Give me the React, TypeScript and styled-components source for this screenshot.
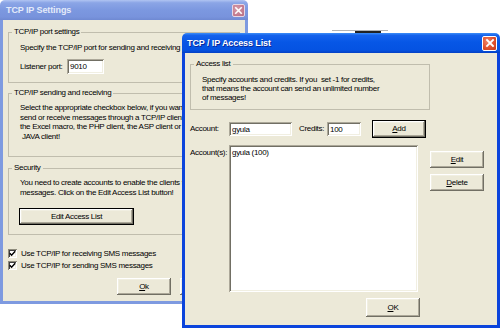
import React from "react";
import styled, { createGlobalStyle, css } from "styled-components";

const GlobalStyle = createGlobalStyle`
  html, body {
    margin: 0;
    padding: 0;
    background: #fff;
    overflow: hidden;
  }
  body {
    font-family: "Liberation Sans", Arial, sans-serif;
    font-size: 8px;
    letter-spacing: -0.3px;
    color: #000;
  }
`;

const Desktop = styled.div`
  position: relative;
  width: 500px;
  height: 328px;
  overflow: hidden;
  background: #fff;
`;

// a sliver of some other window peeking out above the access list dialog
const BackSliver = styled.div`
  position: absolute;
  left: 332px;
  top: 30px;
  width: 56px;
  height: 3px;
  border-top: 1px solid #b4b4b4;
  display: flex;
  padding-left: 23px;
  box-sizing: border-box;
`;

const BackMark = styled.div`
  width: 26px;
  height: 2px;
  background: #222;
`;

const Window = styled.div<{ $x: number; $y: number; $w: number; $h: number }>`
  position: absolute;
  left: ${(p) => p.$x}px;
  top: ${(p) => p.$y}px;
  width: ${(p) => p.$w}px;
  height: ${(p) => p.$h}px;
  display: flex;
  flex-direction: column;
`;

const activeTitle = css`
  background: linear-gradient(
    180deg,
    #3d8ef7 0%,
    #1562ec 12%,
    #0757e6 45%,
    #0553e2 85%,
    #0440c4 100%
  );
`;

const inactiveTitle = css`
  background: linear-gradient(
    180deg,
    #b0c4f2 0%,
    #8ba5e6 14%,
    #7c98e0 50%,
    #7893dc 85%,
    #6f89d2 100%
  );
`;

const TitleBar = styled.div<{ $active?: boolean }>`
  flex: none;
  height: 20px;
  display: flex;
  align-items: center;
  justify-content: space-between;
  padding: 0 3px 0 ${(p) => (p.$active ? 5 : 6)}px;
  border-radius: 5px 5px 0 0;
  ${(p) => (p.$active ? activeTitle : inactiveTitle)}
`;

const Title = styled.span<{ $active?: boolean }>`
  font-weight: bold;
  font-size: 9px;
  letter-spacing: -0.1px;
  line-height: 12px;
  color: ${(p) => (p.$active ? "#fff" : "#e4ebfa")};
  text-shadow: ${(p) => (p.$active ? "1px 1px 0 #0a2a9a" : "none")};
  white-space: nowrap;
`;

const CloseButton = styled.div<{ $active?: boolean }>`
  box-sizing: border-box;
  width: ${(p) => (p.$active ? 15 : 13)}px;
  height: ${(p) => (p.$active ? 15 : 13)}px;
  border: 1px solid ${(p) => (p.$active ? "#fff" : "#e6d6e4")};
  border-radius: 2px;
  display: flex;
  align-items: center;
  justify-content: center;
  background: ${(p) =>
    p.$active
      ? "radial-gradient(circle at 35% 35%, #f0866a 0%, #e0502c 55%, #c43a1c 100%)"
      : "radial-gradient(circle at 35% 35%, #d69aa9 0%, #c47d90 60%, #b46e84 100%)"};
`;

const Body = styled.div<{ $active?: boolean; $pt: number; $pr: number }>`
  flex: 1;
  display: flex;
  flex-direction: column;
  align-items: stretch;
  background: #ece9d8;
  border: 3px solid ${(p) => (p.$active ? "#0b44dc" : "#7e9ae0")};
  border-top: none;
  padding: ${(p) => p.$pt}px ${(p) => p.$pr}px 0 5px;
`;

const GroupBox = styled.fieldset<{ $mt?: number; $w?: number }>`
  margin: ${(p) => p.$mt ?? 0}px 0 0;
  padding: 0 0 0 3px;
  border: 1px solid #c0bdad;
  min-width: 0;
  ${(p) =>
    p.$w &&
    css`
      width: ${p.$w}px;
      box-sizing: border-box;
      align-self: flex-start;
    `}
`;

const Legend = styled.legend`
  padding: 0 2px;
  line-height: 12px;
`;

const GroupBody = styled.div<{ $pt: number; $pb: number }>`
  display: flex;
  flex-direction: column;
  align-items: flex-start;
  padding: ${(p) => p.$pt}px 0 ${(p) => p.$pb}px 8px;
`;

const Para = styled.div<{ $lh: number }>`
  line-height: ${(p) => p.$lh}px;
  white-space: nowrap;
`;

const Row = styled.div<{ $mt?: number }>`
  display: flex;
  align-items: center;
  margin-top: ${(p) => p.$mt ?? 0}px;
`;

const TopRow = styled.div<{ $mt?: number }>`
  display: flex;
  align-items: flex-start;
  margin-top: ${(p) => p.$mt ?? 0}px;
`;

const Label = styled.span<{ $w: number; $ml?: number; $mt?: number }>`
  flex: none;
  width: ${(p) => p.$w}px;
  margin-left: ${(p) => p.$ml ?? 0}px;
  margin-top: ${(p) => p.$mt ?? 0}px;
  line-height: 12px;
  white-space: nowrap;
`;

const sunken = css`
  box-shadow: inset 1px 1px #aca899, inset -1px -1px #fff, inset 2px 2px #716f64,
    inset -2px -2px #f1efe2;
`;

const TextField = styled.div<{ $w: number; $h: number }>`
  flex: none;
  box-sizing: border-box;
  width: ${(p) => p.$w}px;
  height: ${(p) => p.$h}px;
  padding: 0 3px;
  background: #fff;
  display: flex;
  align-items: center;
  white-space: nowrap;
  ${sunken}
`;

const ListBox = styled.div<{ $w: number; $h: number }>`
  flex: none;
  box-sizing: border-box;
  width: ${(p) => p.$w}px;
  height: ${(p) => p.$h}px;
  padding: 2px 3px;
  background: #fff;
  line-height: 11px;
  ${sunken}
`;

const Button = styled.button<{ $w: number; $h: number; $default?: boolean; $mt?: number; $ml?: number }>`
  flex: none;
  box-sizing: border-box;
  width: ${(p) => p.$w}px;
  height: ${(p) => p.$h}px;
  margin: ${(p) => p.$mt ?? 0}px 0 0 ${(p) => p.$ml ?? 0}px;
  padding: 0;
  font: inherit;
  letter-spacing: inherit;
  color: #000;
  background: #ece9d8;
  border: ${(p) => (p.$default ? "1px solid #000" : "none")};
  box-shadow: inset -1px -1px #716f64, inset 1px 1px #fff, inset -2px -2px #aca899,
    inset 2px 2px #f1efe2;
  line-height: 10px;
  white-space: nowrap;
  cursor: default;
`;

const ButtonColumn = styled.div<{ $ml: number; $mt: number }>`
  display: flex;
  flex-direction: column;
  gap: 6px;
  margin: ${(p) => p.$mt}px 0 0 ${(p) => p.$ml}px;
`;

const ButtonRow = styled.div<{ $mt: number; $mr: number }>`
  display: flex;
  justify-content: flex-end;
  gap: 9px;
  margin: ${(p) => p.$mt}px ${(p) => p.$mr}px 0 0;
`;

const CheckRow = styled.div<{ $mt?: number }>`
  display: flex;
  align-items: center;
  gap: 4px;
  height: 12px;
  margin-top: ${(p) => p.$mt ?? 0}px;
  white-space: nowrap;
`;

const CheckBox = styled.div`
  flex: none;
  box-sizing: border-box;
  width: 9px;
  height: 9px;
  background: #fff;
  display: flex;
  align-items: center;
  justify-content: center;
  box-shadow: inset 1px 1px #8e8b7c, inset -1px -1px #fff, inset 2px 2px #404040,
    inset -2px -2px #f1efe2;
`;

const CloseIcon = ({ size }: { size: number }) => (
  <svg width={size} height={size} viewBox="0 0 10 10">
    <path d="M2 2 L8 8 M8 2 L2 8" stroke="#fff" strokeWidth="1.8" strokeLinecap="square" />
  </svg>
);

const Check = () => (
  <svg width="7" height="7" viewBox="0 0 7 7">
    <path d="M0.8 3.2 L2.6 5.2 L6.2 1.2" stroke="#000" strokeWidth="1.4" fill="none" />
  </svg>
);

export default function App() {
  return (
    <Desktop>
      <GlobalStyle />
      <BackSliver>
        <BackMark />
      </BackSliver>

      <Window $x={0} $y={0} $w={248} $h={304}>
        <TitleBar>
          <Title>TCP IP Settings</Title>
          <CloseButton>
            <CloseIcon size={9} />
          </CloseButton>
        </TitleBar>
        <Body $pt={6} $pr={5}>
          <GroupBox>
            <Legend>TCP/IP port settings</Legend>
            <GroupBody $pt={5} $pb={8}>
              <Para $lh={10}>Specify the TCP/IP port for sending and receiving messages.</Para>
              <Row $mt={6}>
                <Label $w={47}>Listener port:</Label>
                <TextField $w={37} $h={15}>9010</TextField>
              </Row>
            </GroupBody>
          </GroupBox>

          <GroupBox $mt={4}>
            <Legend>TCP/IP sending and receiving</Legend>
            <GroupBody $pt={4} $pb={15}>
              <Para $lh={9.5}>
                Select the appropriate checkbox below, if you want to
                <br />
                send or receive messages through a TCP/IP client like
                <br />
                the Excel macro, the PHP client, the ASP client or the
                <br />
                &nbsp;JAVA client!
              </Para>
            </GroupBody>
          </GroupBox>

          <GroupBox $mt={5}>
            <Legend>Security</Legend>
            <GroupBody $pt={4} $pb={9}>
              <Para $lh={10}>
                You need to create accounts to enable the clients to send
                <br />
                messages. Click on the Edit Access List button!
              </Para>
              <Button $default $w={115} $h={17} $mt={10} $ml={-1}>
                Edit Access List
              </Button>
            </GroupBody>
          </GroupBox>

          <CheckRow $mt={12}>
            <CheckBox>
              <Check />
            </CheckBox>
            Use TCP/IP for receiving SMS messages
          </CheckRow>
          <CheckRow>
            <CheckBox>
              <Check />
            </CheckBox>
            Use TCP/IP for sending SMS messages
          </CheckRow>

          <ButtonRow $mt={7} $mr={6}>
            <Button $w={54} $h={17}>
              <u>O</u>k
            </Button>
            <Button $w={54} $h={17}>
              <u>C</u>ancel
            </Button>
          </ButtonRow>
        </Body>
      </Window>

      <Window $x={182} $y={33} $w={318} $h={295}>
        <TitleBar $active>
          <Title $active>TCP / IP Access List</Title>
          <CloseButton $active>
            <CloseIcon size={10} />
          </CloseButton>
        </TitleBar>
        <Body $active $pt={5} $pr={5}>
          <GroupBox $w={240}>
            <Legend>Access list</Legend>
            <GroupBody $pt={5} $pb={7}>
              <Para $lh={9}>
                Specify accounts and credits. If you&nbsp; set -1 for credits,
                <br />
                that means the account can send an unlimited number
                <br />
                of messages!
              </Para>
            </GroupBody>
          </GroupBox>

          <Row $mt={10}>
            <Label $w={39}>Account:</Label>
            <TextField $w={63} $h={14}>gyula</TextField>
            <Label $w={28} $ml={7}>Credits:</Label>
            <TextField $w={34} $h={14}>100</TextField>
            <Button $default $w={54} $h={18} $ml={11}>
              <u>A</u>dd
            </Button>
          </Row>

          <TopRow $mt={7}>
            <Label $w={39} $mt={2}>Account(s):</Label>
            <ListBox $w={189} $h={147}>gyula (100)</ListBox>
            <ButtonColumn $ml={12} $mt={6}>
              <Button $w={54} $h={17}>
                <u>E</u>dit
              </Button>
              <Button $w={54} $h={17}>
                <u>D</u>elete
              </Button>
            </ButtonColumn>
          </TopRow>

          <ButtonRow $mt={6} $mr={72}>
            <Button $w={54} $h={19}>
              <u>O</u>K
            </Button>
          </ButtonRow>
        </Body>
      </Window>
    </Desktop>
  );
}
